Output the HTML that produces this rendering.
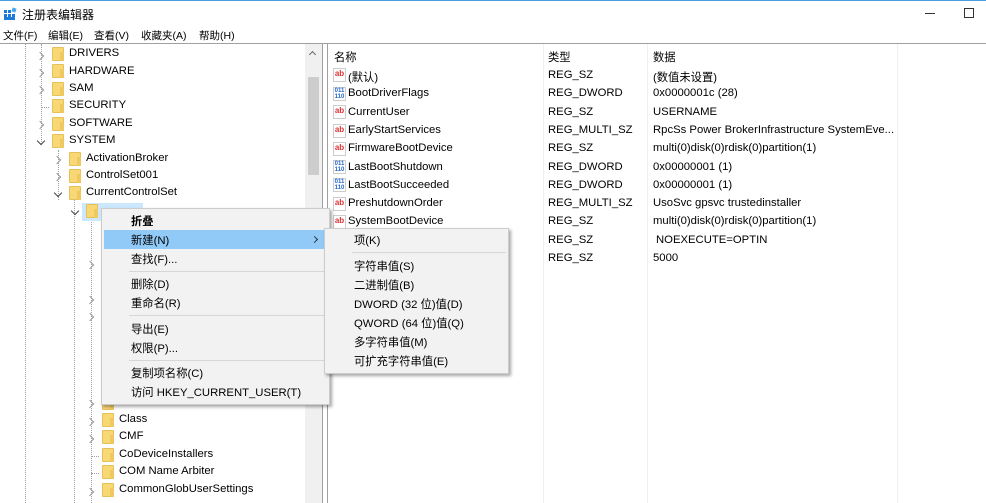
<!DOCTYPE html>
<html><head><meta charset="utf-8"><style>
*{margin:0;padding:0;box-sizing:border-box}
body{width:986px;height:503px;overflow:hidden;background:#fff;font-family:"Liberation Sans","Noto Sans CJK SC",sans-serif;font-size:11.3px;color:#000;position:relative}
.a{position:absolute;white-space:nowrap}
.vl{position:absolute;width:0;border-left:1px dotted #a0a0a0}
.hl{position:absolute;height:0;border-top:1px dotted #a0a0a0;width:8px}
.fd{position:absolute;width:12px;height:14px;background:#f8d775;border:1px solid #e8c05a;border-radius:1px}
.fd:after{content:"";position:absolute;right:-1px;bottom:-1px;width:4px;height:9px;background:#f0c860}
.ch{position:absolute;width:6px;height:6px;border-top:1.5px solid #999;border-right:1.5px solid #999;transform:translate(0,4px) rotate(45deg)}
.ch.o{border-color:#444;transform:translate(1px,2px) rotate(135deg)}
.ic{position:absolute;width:13px;height:14px;font-size:8px;font-weight:bold;line-height:10px;text-align:center;background:#fff;border:1px solid #ccc}
.ab{color:#d33}
.bn{color:#2266cc;font-size:6px;line-height:6px}
.mi{position:absolute;left:29px}
</style></head><body>
<div class="a" style="left:0;top:0;width:986px;height:1px;background:#4a9ee0"></div>
<svg class="a" style="left:4px;top:7px" width="13" height="13" viewBox="0 0 13 13"><rect x="0" y="3" width="3" height="3" fill="#1e7bd8"/><rect x="4" y="3" width="3" height="3" fill="#1e7bd8"/><rect x="0" y="7" width="3" height="3" fill="#1e7bd8"/><rect x="4" y="7" width="3" height="3" fill="#1e7bd8"/><rect x="8" y="7" width="3" height="3" fill="#1e7bd8"/><rect x="0" y="10" width="11" height="3" fill="#1e7bd8"/><rect x="8" y="1" width="4" height="4" fill="#4aa8f0" transform="rotate(20 10 3)"/></svg>
<div class="a" style="left:22px;top:6px;font-size:12px">注册表编辑器</div>
<div class="a" style="left:925px;top:13px;width:10px;height:1px;background:#333"></div>
<div class="a" style="left:964px;top:8px;width:10px;height:10px;border:1px solid #333"></div>
<div class="a" style="left:3px;top:28px;font-size:10.5px">文件(F)</div>
<div class="a" style="left:48px;top:28px;font-size:10.5px">编辑(E)</div>
<div class="a" style="left:94px;top:28px;font-size:10.5px">查看(V)</div>
<div class="a" style="left:141px;top:28px;font-size:10.5px">收藏夹(A)</div>
<div class="a" style="left:199px;top:28px;font-size:10.5px">帮助(H)</div>
<div class="a" style="left:0;top:43px;width:986px;height:1px;background:#a0a0a0"></div>
<div class="a" style="left:322px;top:44px;width:1px;height:459px;background:#a0a0a0"></div>
<div class="a" style="left:305px;top:44px;width:17px;height:459px;background:#f0f0f0"></div>
<div class="a" style="left:308px;top:77px;width:11px;height:98px;background:#cdcdcd"></div>
<div class="a" style="left:310px;top:52px;width:5px;height:5px;border-top:1.5px solid #666;border-left:1.5px solid #666;transform:rotate(45deg)"></div>
<div class="vl" style="left:25px;top:44px;height:459px"></div>
<div class="vl" style="left:41px;top:44px;height:100px"></div>
<div class="vl" style="left:58px;top:150px;height:50px"></div>
<div class="vl" style="left:74px;top:200px;height:303px"></div>
<div class="vl" style="left:91px;top:220px;height:283px"></div>

<div class="ch" style="left:37px;top:49px"></div><div class="fd" style="left:52px;top:47px"></div><div class="a" style="left:69px;top:47px">DRIVERS</div>
<div class="ch" style="left:37px;top:66px"></div><div class="fd" style="left:52px;top:64px"></div><div class="a" style="left:69px;top:65px">HARDWARE</div>
<div class="ch" style="left:37px;top:83px"></div><div class="fd" style="left:52px;top:82px"></div><div class="a" style="left:69px;top:82px">SAM</div>
<div class="hl" style="left:41px;top:107px"></div><div class="fd" style="left:52px;top:99px"></div><div class="a" style="left:69px;top:99px">SECURITY</div>
<div class="ch" style="left:37px;top:118px"></div><div class="fd" style="left:52px;top:117px"></div><div class="a" style="left:69px;top:117px">SOFTWARE</div>
<div class="ch o" style="left:37px;top:136px"></div><div class="fd" style="left:52px;top:134px"></div><div class="a" style="left:69px;top:134px">SYSTEM</div>
<div class="ch" style="left:54px;top:153px"></div><div class="fd" style="left:69px;top:152px"></div><div class="a" style="left:86px;top:152px">ActivationBroker</div>
<div class="ch" style="left:54px;top:170px"></div><div class="fd" style="left:69px;top:169px"></div><div class="a" style="left:86px;top:169px">ControlSet001</div>
<div class="ch o" style="left:54px;top:188px"></div><div class="fd" style="left:69px;top:186px"></div><div class="a" style="left:86px;top:186px">CurrentControlSet</div>
<div class="a" style="left:82px;top:203px;width:61px;height:18px;background:#cce8ff"></div>
<div class="ch o" style="left:71px;top:206px"></div><div class="fd" style="left:86px;top:204px"></div>
<div class="ch" style="left:87px;top:258px"></div>
<div class="ch" style="left:87px;top:293px"></div>
<div class="ch" style="left:87px;top:310px"></div>
<div class="ch" style="left:87px;top:397px"></div><div class="fd" style="left:102px;top:396px"></div>
<div class="ch" style="left:87px;top:415px"></div><div class="fd" style="left:102px;top:413px"></div><div class="a" style="left:119px;top:413px">Class</div>
<div class="ch" style="left:87px;top:432px"></div><div class="fd" style="left:102px;top:430px"></div><div class="a" style="left:119px;top:430px">CMF</div>
<div class="hl" style="left:91px;top:456px"></div><div class="fd" style="left:102px;top:448px"></div><div class="a" style="left:119px;top:448px">CoDeviceInstallers</div>
<div class="hl" style="left:91px;top:473px"></div><div class="fd" style="left:102px;top:465px"></div><div class="a" style="left:119px;top:465px">COM Name Arbiter</div>
<div class="ch" style="left:87px;top:485px"></div><div class="fd" style="left:102px;top:483px"></div><div class="a" style="left:119px;top:483px">CommonGlobUserSettings</div>

<div class="a" style="left:327px;top:44px;width:1px;height:459px;background:#a0a0a0"></div>
<div class="a" style="left:543px;top:44px;width:1px;height:459px;background:#f0f0f0"></div>
<div class="a" style="left:647px;top:44px;width:1px;height:459px;background:#f0f0f0"></div>
<div class="a" style="left:897px;top:44px;width:1px;height:459px;background:#f0f0f0"></div>
<div class="a" style="left:334px;top:49px">名称</div>
<div class="a" style="left:548px;top:49px">类型</div>
<div class="a" style="left:653px;top:49px">数据</div>
<div style="position:absolute;left:0;top:0">
<div class="ic ab" style="left:333px;top:68px">ab</div><div class="a" style="left:348px;top:69px">(默认)</div><div class="a" style="left:548px;top:69px">REG_SZ</div><div class="a" style="left:653px;top:69px">(数值未设置)</div>
<div class="ic bn" style="left:333px;top:87px">011<br>110</div><div class="a" style="left:348px;top:87px">BootDriverFlags</div><div class="a" style="left:548px;top:87px">REG_DWORD</div><div class="a" style="left:653px;top:87px">0x0000001c (28)</div>
<div class="ic ab" style="left:333px;top:105px">ab</div><div class="a" style="left:348px;top:106px">CurrentUser</div><div class="a" style="left:548px;top:106px">REG_SZ</div><div class="a" style="left:653px;top:106px">USERNAME</div>
<div class="ic ab" style="left:333px;top:124px">ab</div><div class="a" style="left:348px;top:124px">EarlyStartServices</div><div class="a" style="left:548px;top:124px">REG_MULTI_SZ</div><div class="a" style="left:653px;top:124px">RpcSs Power BrokerInfrastructure SystemEve...</div>
<div class="ic ab" style="left:333px;top:142px">ab</div><div class="a" style="left:348px;top:142px">FirmwareBootDevice</div><div class="a" style="left:548px;top:142px">REG_SZ</div><div class="a" style="left:653px;top:142px">multi(0)disk(0)rdisk(0)partition(1)</div>
<div class="ic bn" style="left:333px;top:160px">011<br>110</div><div class="a" style="left:348px;top:161px">LastBootShutdown</div><div class="a" style="left:548px;top:161px">REG_DWORD</div><div class="a" style="left:653px;top:161px">0x00000001 (1)</div>
<div class="ic bn" style="left:333px;top:178px">011<br>110</div><div class="a" style="left:348px;top:179px">LastBootSucceeded</div><div class="a" style="left:548px;top:179px">REG_DWORD</div><div class="a" style="left:653px;top:179px">0x00000001 (1)</div>
<div class="ic ab" style="left:333px;top:197px">ab</div><div class="a" style="left:348px;top:197px">PreshutdownOrder</div><div class="a" style="left:548px;top:197px">REG_MULTI_SZ</div><div class="a" style="left:653px;top:197px">UsoSvc gpsvc trustedinstaller</div>
<div class="ic ab" style="left:333px;top:215px">ab</div><div class="a" style="left:348px;top:215px">SystemBootDevice</div><div class="a" style="left:548px;top:215px">REG_SZ</div><div class="a" style="left:653px;top:215px">multi(0)disk(0)rdisk(0)partition(1)</div>
<div class="a" style="left:548px;top:234px">REG_SZ</div><div class="a" style="left:656px;top:234px">NOEXECUTE=OPTIN</div>
<div class="a" style="left:548px;top:252px">REG_SZ</div><div class="a" style="left:653px;top:252px">5000</div>
</div>

<div class="a" style="left:101px;top:208px;width:229px;height:197px;background:#f2f2f2;border:1px solid #ccc;box-shadow:2px 2px 3px rgba(0,0,0,.35)">
<div class="a" style="left:2px;top:21px;width:221px;height:19px;background:#91c9f7"></div>
<div class="a mi" style="top:4px;font-weight:bold">折叠</div>
<div class="a mi" style="top:23px">新建(N)</div>
<div class="a" style="left:210px;top:28px;width:5px;height:5px;border-top:1.2px solid #333;border-right:1.2px solid #333;transform:rotate(45deg)"></div>
<div class="a mi" style="top:42px">查找(F)...</div>
<div class="a" style="left:27px;top:62px;width:196px;height:1px;background:#d7d7d7"></div>
<div class="a mi" style="top:67px">删除(D)</div>
<div class="a mi" style="top:86px">重命名(R)</div>
<div class="a" style="left:27px;top:106px;width:196px;height:1px;background:#d7d7d7"></div>
<div class="a mi" style="top:112px">导出(E)</div>
<div class="a mi" style="top:131px">权限(P)...</div>
<div class="a" style="left:27px;top:151px;width:196px;height:1px;background:#d7d7d7"></div>
<div class="a mi" style="top:156px">复制项名称(C)</div>
<div class="a mi" style="top:175px">访问 HKEY_CURRENT_USER(T)</div>
</div>
<div class="a" style="left:324px;top:228px;width:185px;height:146px;background:#f2f2f2;border:1px solid #ccc;box-shadow:2px 2px 3px rgba(0,0,0,.35)">
<div class="a" style="left:29px;top:3px">项(K)</div>
<div class="a" style="left:27px;top:23px;width:154px;height:1px;background:#d7d7d7"></div>
<div class="a" style="left:29px;top:29px">字符串值(S)</div>
<div class="a" style="left:29px;top:48px">二进制值(B)</div>
<div class="a" style="left:29px;top:67px">DWORD (32 位)值(D)</div>
<div class="a" style="left:29px;top:86px">QWORD (64 位)值(Q)</div>
<div class="a" style="left:29px;top:105px">多字符串值(M)</div>
<div class="a" style="left:29px;top:124px">可扩充字符串值(E)</div>
</div>
</body></html>
